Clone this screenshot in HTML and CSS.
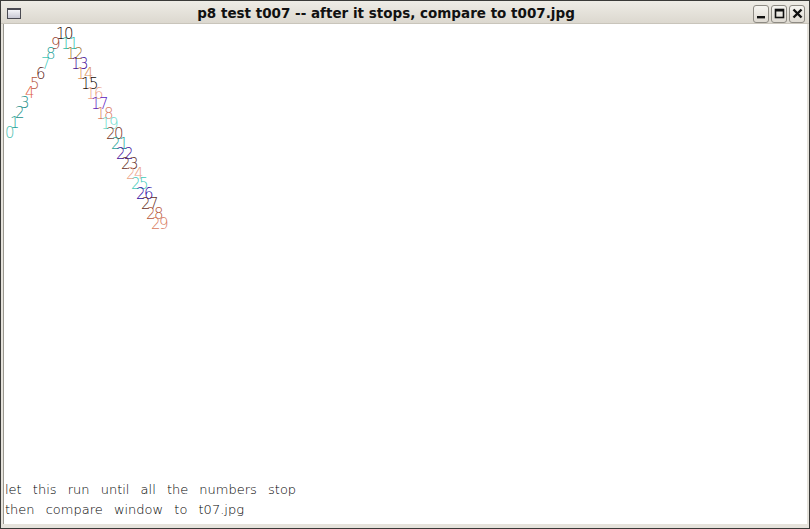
FILE: index.html
```html
<!DOCTYPE html>
<html>
<head>
<meta charset="utf-8">
<link rel="stylesheet" href="styles.css">
</head>
<body>
<div class="window">
  <div class="titlebar">
    <div class="winicon"></div>
    <div class="title">p8 test t007 -- after it stops, compare to t007.jpg</div>
    <div class="buttons">
      <div class="btn"><svg width="11" height="11" viewBox="0 0 11 11"><rect x="1" y="8" width="8" height="2.4" fill="#111"/></svg></div>
      <div class="btn"><svg width="11" height="11" viewBox="0 0 11 11"><rect x="1.5" y="1.5" width="8" height="8" fill="none" stroke="#111" stroke-width="1.6"/><rect x="1.5" y="1.5" width="8" height="2" fill="#111"/></svg></div>
      <div class="btn"><svg width="11" height="11" viewBox="0 0 11 11"><path d="M1.5 1.5 L9.5 9.5 M9.5 1.5 L1.5 9.5" stroke="#111" stroke-width="2.4"/></svg></div>
    </div>
  </div>
  <div class="client">
    <div class="canvas">
      <span class="n c-teal1" style="left:1px;top:102px">0</span>
      <span class="n c-teal2" style="left:6px;top:92px">1</span>
      <span class="n c-teal3" style="left:11px;top:82px">2</span>
      <span class="n c-teal3" style="left:16px;top:72px">3</span>
      <span class="n c-salmon" style="left:21px;top:62px">4</span>
      <span class="n c-rust" style="left:26px;top:53px">5</span>
      <span class="n c-dbrown" style="left:32px;top:43px">6</span>
      <span class="n c-cyan" style="left:37px;top:33px">7</span>
      <span class="n c-teal2" style="left:42px;top:23px">8</span>
      <span class="n c-brown" style="left:47px;top:13px">9</span>
      <span class="n c-dark" style="left:52px;top:3px">10</span>
      <span class="n c-cyan2" style="left:57px;top:13px">11</span>
      <span class="n c-tan" style="left:62px;top:23px">12</span>
      <span class="n c-purple" style="left:67px;top:33px">13</span>
      <span class="n c-peach" style="left:72px;top:43px">14</span>
      <span class="n c-black" style="left:77px;top:53px">15</span>
      <span class="n c-lsalmon" style="left:82px;top:63px">16</span>
      <span class="n c-purple2" style="left:87px;top:73px">17</span>
      <span class="n c-salmon2" style="left:92px;top:83px">18</span>
      <span class="n c-lcyan" style="left:97px;top:93px">19</span>
      <span class="n c-brown2" style="left:102px;top:103px">20</span>
      <span class="n c-teal2" style="left:107px;top:113px">21</span>
      <span class="n c-purple" style="left:112px;top:123px">22</span>
      <span class="n c-brown3" style="left:117px;top:133px">23</span>
      <span class="n c-lsalmon" style="left:122px;top:143px">24</span>
      <span class="n c-cyan" style="left:127px;top:153px">25</span>
      <span class="n c-purple3" style="left:132px;top:163px">26</span>
      <span class="n c-brown3" style="left:137px;top:173px">27</span>
      <span class="n c-rust" style="left:142px;top:183px">28</span>
      <span class="n c-salmon2" style="left:147px;top:193px">29</span>
    </div>
    <div class="notes">
      <div>let this run until all the numbers stop</div>
      <div>then compare window to t07.jpg</div>
    </div>
  </div>
</div>
</body>
</html>
```

FILE: styles.css
```css
html, body {
  margin: 0;
  padding: 0;
  width: 810px;
  height: 529px;
  overflow: hidden;
  background: #3a3a38;
}
.window {
  box-sizing: border-box;
  width: 810px;
  height: 529px;
  border: 1px solid #3a3a38;
  background: #e6e3dc;
  display: flex;
  flex-direction: column;
  padding: 0 2px 4px 2px;
}
.titlebar {
  height: 22px;
  display: flex;
  align-items: center;
  position: relative;
  background: linear-gradient(#eeece6, #dcd8cf);
  margin: 0 -2px;
  padding: 0 4px 0 6px;
  border-bottom: 1px solid #c9c5bb;
}
.winicon {
  width: 14px;
  height: 11px;
  box-sizing: border-box;
  border: 1px solid #4a4a52;
  border-top-width: 2px;
  background: linear-gradient(#f4f4f8, #c8c8d4);
  margin-top: 2px;
}
.title {
  flex: 1;
  text-align: center;
  font-family: "DejaVu Sans", sans-serif;
  font-weight: bold;
  font-size: 13.5px;
  color: #111;
  padding-left: 0;
  padding-right: 2px;
  padding-top: 2px;
}
.buttons {
  display: flex;
  gap: 2px;
  margin-top: 3px;
}
.btn {
  width: 16px;
  height: 18px;
  box-sizing: border-box;
  border: 1px solid #8e8b84;
  border-radius: 3px;
  background: linear-gradient(#f6f5f1, #dedad2);
  display: flex;
  align-items: center;
  justify-content: center;
}
.client {
  flex: 1;
  background: #ffffff;
  display: flex;
  flex-direction: column;
  border-left: 1px solid #9a9890;
}
.canvas {
  flex: 1;
  position: relative;
}
.n {
  position: absolute;
  font-family: "DejaVu Sans", sans-serif;
  font-weight: 200;
  font-size: 15px;
  line-height: 15px;
  letter-spacing: -1.5px;
  white-space: nowrap;
}
.notes {
  font-family: "DejaVu Sans", sans-serif;
  font-weight: 200;
  font-size: 13px;
  line-height: 20px;
  word-spacing: 7px;
  color: #000;
  padding: 0 0 4px 1px;
}
.c-teal1 { color: #4fc0b0; }
.c-teal2 { color: #23a298; }
.c-teal3 { color: #1a8f88; }
.c-salmon { color: #e0603f; }
.c-rust { color: #b45438; }
.c-dbrown { color: #5a2014; }
.c-cyan { color: #3fcab9; }
.c-cyan2 { color: #2cbcaa; }
.c-brown { color: #963c2c; }
.c-dark { color: #2c0e06; }
.c-tan { color: #a6722f; }
.c-purple { color: #400a98; }
.c-purple2 { color: #5a18c0; }
.c-purple3 { color: #2c06a0; }
.c-peach { color: #dc9358; }
.c-black { color: #140a04; }
.c-lsalmon { color: #eca286; }
.c-salmon2 { color: #d87a5e; }
.c-lcyan { color: #6cdccc; }
.c-brown2 { color: #763224; }
.c-brown3 { color: #5e2c1e; }
```
